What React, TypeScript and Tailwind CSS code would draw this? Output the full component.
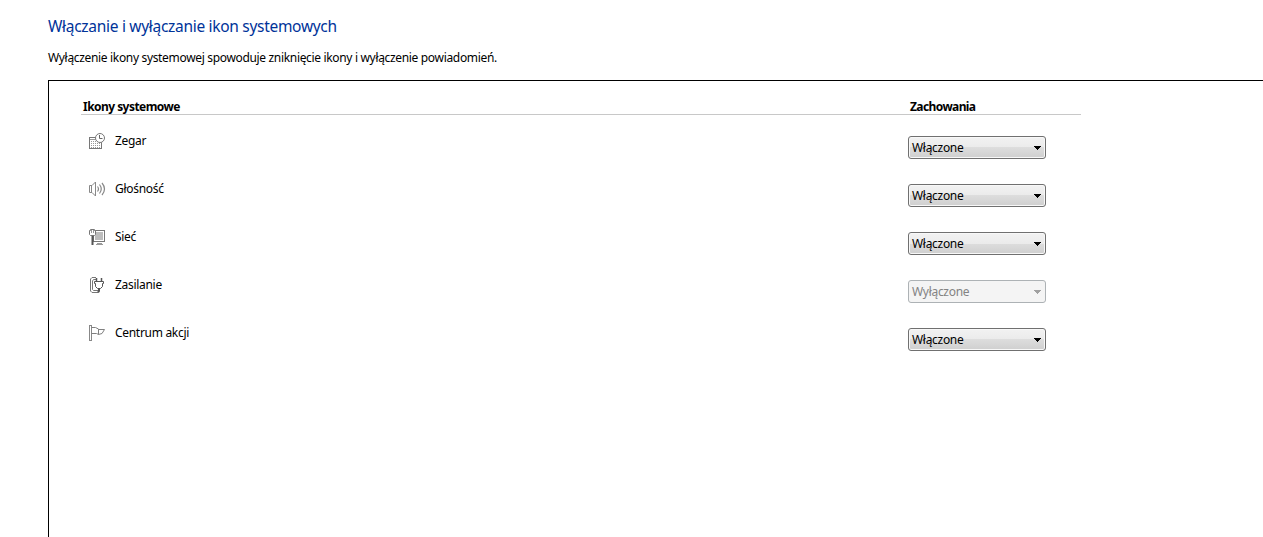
import type { ReactNode } from "react"

type Item = {
  name: string
  icon: ReactNode
  enabled: boolean
}

function Icon({ children }: { children: ReactNode }) {
  return (
    <svg width="17" height="17" viewBox="0 0 17 17" fill="none" stroke="#777" strokeWidth="1" className="shrink-0">
      {children}
    </svg>
  )
}

const ClockIcon = (
  <Icon>
    <rect x="0.5" y="4.5" width="12" height="11" fill="#fff" stroke="#777" />
    <path d="M1 6.5h11" stroke="#999" />
    <path d="M2 8.5h9M2 10.5h9M2 12.5h9M2 14.5h9" stroke="#999" strokeDasharray="1 1" />
    <circle cx="11" cy="5" r="4.5" fill="#fff" stroke="#777" />
    <path d="M10.5 2v3.5h3" stroke="#666" />
  </Icon>
)

const VolumeIcon = (
  <Icon>
    <path d="M3 4.5H0.5v7H3M3 4.5L6.5 1v14L3 11.5M2.5 5v6" stroke="#888" />
    <path d="M8.5 5.5q2 2.5 0 5M10.5 3.5q3.5 4.5 0 9M13 2q5 6 0 12" stroke="#888" strokeWidth="1.2" />
  </Icon>
)

const NetworkIcon = (
  <Icon>
    <rect x="4.5" y="1.5" width="11" height="11" fill="#fff" stroke="#777" />
    <rect x="6" y="3" width="8" height="8" fill="#bdbdbd" stroke="none" />
    <path d="M7 15.5h7M8 14.5h5" stroke="#999" />
    <path d="M1.5 0.5h4v1h1v4l-1 1h-4l-1-1v-4h1z" fill="#fff" stroke="#777" />
    <path d="M2.5 1v3M4.5 1v3" stroke="#999" />
    <path d="M3.5 7v9" stroke="#555" strokeWidth="2" />
  </Icon>
)

const PowerIcon = (
  <Icon>
    <path d="M7 0.5H3L1.5 2v12L3 15.5h6M7 2.5H4.5L3.5 4v8.5l1 1H9" stroke="#777" />
    <path d="M7.5 1v4M12.5 1v4" stroke="#555" strokeWidth="1.5" />
    <path d="M5.5 4.5h9v2h-1v3l-2 2h-3l-2-2v-3h-1z" fill="#fff" stroke="#555" />
    <path d="M10 11.5v2.5l-1 1.5" stroke="#555" strokeWidth="2" />
  </Icon>
)

const FlagIcon = (
  <Icon>
    <rect x="0.5" y="0.5" width="2" height="15" fill="#fff" stroke="#888" />
    <path d="M2.5 2.5h4l3 1.5v5.5l-2-1h-5M9.5 4.5h6l-2.5 4-3.5 1" stroke="#808080" />
  </Icon>
)

const items: Item[] = [
  { name: "Zegar", icon: ClockIcon, enabled: true },
  { name: "Głośność", icon: VolumeIcon, enabled: true },
  { name: "Sieć", icon: NetworkIcon, enabled: true },
  { name: "Zasilanie", icon: PowerIcon, enabled: false },
  { name: "Centrum akcji", icon: FlagIcon, enabled: true },
]

function BehaviorSelect({ enabled }: { enabled: boolean }) {
  const look = enabled
    ? "border-[#707070] bg-[linear-gradient(#f2f2f2_0%,#ebebeb_50%,#dddddd_50%,#cfcfcf_100%)] text-black shadow-[inset_0_0_0_1px_#f8f8f8]"
    : "border-[#adb2b5] bg-[#f4f4f4] text-[#838383]"

  return (
    <button
      disabled={!enabled}
      className={`flex h-[23px] w-[138px] items-center justify-between rounded-[3px] border pl-[3px] pr-1 text-xs tracking-[-0.3px] ${look}`}
    >
      <span>{enabled ? "Włączone" : "Wyłączone"}</span>
      <svg width="7" height="4" viewBox="0 0 7 4" shapeRendering="crispEdges">
        <path d="M0 0h7v1H6v1H5v1H4v1H3V3H2V2H1V1H0z" fill={enabled ? "#000" : "#a0a0a0"} />
      </svg>
    </button>
  )
}

export default function App() {
  return (
    <div className="flex h-[537px] flex-col overflow-hidden bg-white pl-12 font-['Noto_Sans','Open_Sans',sans-serif] text-xs text-black">
      <h1 className="mt-[15px] h-[22px] whitespace-nowrap text-[15.5px] leading-[22px] tracking-[-0.3px] text-[#003399]">
        Włączanie i wyłączanie ikon systemowych
      </h1>
      <p className="mt-[13px] h-4 whitespace-nowrap leading-4 tracking-[-0.33px]">
        Wyłączenie ikony systemowej spowoduje zniknięcie ikony i wyłączenie powiadomień.
      </p>

      <main className="mt-[14px] flex-1 border-l border-t border-black pl-8">
        <div className="w-[1000px]">
          <div className="flex h-[34px] border-b border-[#c8c8c8] pt-[18px] font-bold leading-4">
            <span className="w-[827px] pl-0.5 tracking-[-0.54px]">Ikony systemowe</span>
            <span className="pl-0.5 tracking-[-0.6px]">Zachowania</span>
          </div>

          {items.map((item) => (
            <div key={item.name} className="flex h-12 items-start">
              <div className="flex w-[827px] items-start gap-[9px] pl-2 pt-[18px]">
                {item.icon}
                <span className="-mt-px leading-[17px] tracking-[-0.3px]">{item.name}</span>
              </div>
              <div className="pt-[21px]">
                <BehaviorSelect enabled={item.enabled} />
              </div>
            </div>
          ))}
        </div>
      </main>
    </div>
  )
}
